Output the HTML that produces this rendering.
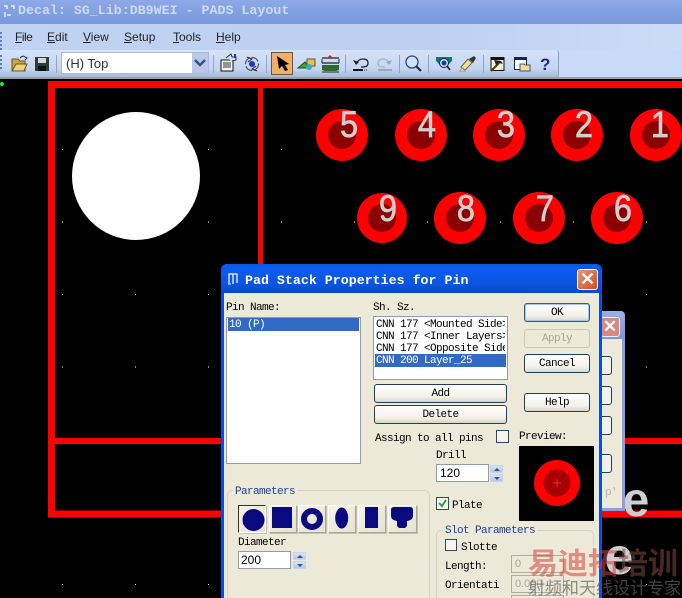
<!DOCTYPE html>
<html><head><meta charset="utf-8">
<style>
html,body{margin:0;padding:0;background:#000}
#p{position:relative;width:682px;height:598px;overflow:hidden;background:#000;font-family:"Liberation Mono",monospace;font-size:10px;color:#000}
#p div{position:absolute;box-sizing:border-box}
.t{white-space:pre;line-height:12px;font-size:11px;letter-spacing:-.6px;margin-top:1px}
.b{background:linear-gradient(#fff,#f2f1ea 70%,#d8d5c6);border:1px solid #1f3f5f;border-radius:3px;text-align:center;line-height:18px;font-size:11px;letter-spacing:-.6px;white-space:pre}
.i{background:#fff;border:1px solid #8d9cae}
.s{background:linear-gradient(#dbe5f7,#b5c7ea);border:1px solid #c6d3ec;width:13px;height:8px;border-radius:1px}
.s::after{content:"";position:absolute;left:3px;top:2px;border-left:3px solid transparent;border-right:3px solid transparent}
.u::after{border-bottom:3px solid #34508a}
.n::after{border-top:3px solid #34508a}
.c{background:#f6f5ee;border:1px solid #2b4a68;width:13px;height:13px}
.g{border:1px solid #d6d2c0;border-radius:5px}
.sh{width:28px;height:28px;background:linear-gradient(135deg,#f4f2e6,#e6e3d2);border:1px solid;border-color:#fff #a9a695 #a9a695 #fff;box-shadow:1px 1px 0 #c4c1b0}
</style></head><body><div id="p">

<!-- title / menu / toolbar -->
<div style="left:0;top:0;width:682px;height:24px;background:linear-gradient(#8ea9e6,#7f9fe0 60%,#7a9ade)"></div>
<div class="t" style="left:18px;top:3px;margin:0;letter-spacing:0;font-size:13.3px;line-height:16px;font-weight:bold;color:#cdd9f3">Decal: SG_Lib:DB9WEI - PADS Layout</div>
<svg style="position:absolute;left:2px;top:3px" width="14" height="16"><path d="M2 3h3v3M9 3h3v3M5 12h4M3 9v5" stroke="#e8eef8" stroke-width="1.4" fill="none"/></svg>
<div style="left:0;top:24px;width:682px;height:26px;background:linear-gradient(90deg,#c0d3f2,#bdd0f1 60%,#cbdcf8)"></div>
<div style="left:0;top:32px;width:2px;height:20px;background:repeating-linear-gradient(#5f7db0 0 2px,transparent 2px 4px)"></div>
<div style="left:0;top:29px;width:682px;height:16px;font:12px/16px 'Liberation Sans',sans-serif;color:#222">
<div style="left:15px;letter-spacing:-.5px"><u>F</u>ile</div><div style="left:47px"><u>E</u>dit</div><div style="left:83px"><u>V</u>iew</div><div style="left:124px"><u>S</u>etup</div><div style="left:173px"><u>T</u>ools</div><div style="left:216px"><u>H</u>elp</div></div>
<div style="left:0;top:50px;width:682px;height:29px;background:#c8daf7"></div>
<div style="left:0;top:50px;width:559px;height:28px;background:linear-gradient(#d6e3f8,#c3d5f2 70%,#a5bad9);border-radius:0 3px 3px 0;border-right:1px solid #8da2c4;border-bottom:1px solid #7288ac"></div>
<div style="left:0;top:77px;width:682px;height:2px;background:#9a9fa8"></div>
<div style="left:0;top:55px;width:2px;height:16px;background:repeating-linear-gradient(#5f7db0 0 2px,transparent 2px 4px)"></div>
<div style="left:61px;top:52px;width:148px;height:22px;background:#fff;border:1px solid #a9bcd6"></div>
<div style="left:66px;top:55px;font:13px/17px 'Liberation Sans',sans-serif;color:#333">(H) Top</div>
<div style="left:192px;top:53px;width:16px;height:20px;background:#b9c9e6"></div>
<svg style="position:absolute;left:0;top:50px" width="560" height="28" viewBox="0 50 560 28">
<path d="M195 60l5 5 5-5" stroke="#34508a" stroke-width="2.400" fill="none"/>
<g stroke="#8ea5c8"><path d="M56.500 55v18M213.500 55v18M266.500 55v18M345.500 55v18M399.500 55v18M428.500 55v18M483.500 55v18"/></g>
<!-- folder -->
<path d="M12 59h6l2 2h5v10H12z" fill="#c8a840" stroke="#6a5420"/><path d="M12 71l4-7h11l-3 7z" fill="#ecd278" stroke="#6a5420"/><path d="M20 58q3-3 5-1l2 1-2 2" stroke="#1c3a78" fill="none"/>
<!-- save -->
<rect x="35" y="57" width="14" height="14" fill="#2f3d38"/><rect x="38" y="58" width="8" height="5" fill="#d8d8d0"/><rect x="38" y="66" width="8" height="5" fill="#111"/>
<!-- props -->
<path d="M221 60h12v11h-12z" fill="#f5f5f2" stroke="#111"/><path d="M223 63h8M223 65h8M223 67h8" stroke="#333"/><path d="M226 58l5-4 1 3h4v3l-4 1" fill="#d8e0f0" stroke="#334"/><path d="M234 54h2v4h-2z" fill="#1c3a9c"/>
<!-- sync -->
<circle cx="252" cy="64" r="6.500" fill="none" stroke="#555" stroke-width="1.300" stroke-dasharray="8 2"/><circle cx="252" cy="64" r="3" fill="#2233c0"/><path d="M247 57l5 2-4 3M257 71l-5-2 4-3" fill="none" stroke="#222"/>
<!-- arrow btn -->
<rect x="271.500" y="52.500" width="21" height="22" fill="#f8ae62" stroke="#5f5a48"/><path d="M277 56l12 8-4 1 3 5-3 1-3-5-3 3z" fill="#000"/>
<!-- green -->
<path d="M298 68l7-6 5 6z" fill="#38a838" stroke="#205020"/><rect x="307" y="59" width="8" height="7" fill="#e8c050" stroke="#554"/><circle cx="309" cy="67" r="3" fill="#40a8c0"/>
<!-- board -->
<path d="M322 58h17M322 63h17" stroke="#222" stroke-width="1.200"/><path d="M330 55l3 3h-6z" fill="#d02020"/><path d="M322 59v4M339 59v4" stroke="#222"/><path d="M322 65h17v5l-3 1h-11l-3-1z" fill="#2c6a2c"/><path d="M322 72h17" stroke="#222"/>
<!-- undo -->
<path d="M356 64q2-5 7-5 5 0 5 4t-5 4h-2" fill="none" stroke="#222" stroke-width="1.200"/><path d="M353 60l3 5 3-3z" fill="#222"/><rect x="353" y="69" width="10" height="2" fill="#111"/><path d="M364 70h4" stroke="#333" stroke-dasharray="1 1"/>
<!-- redo -->
<path d="M390 64q-2-5-7-5-5 0-5 4t5 4h2" fill="none" stroke="#9ba" stroke-width="1.200"/><path d="M392 60l-3 5-3-3z" fill="#9aa"/><rect x="378" y="69" width="14" height="2" fill="#9aa6b4"/>
<!-- zoom -->
<circle cx="412" cy="62" r="6" fill="#cfe3f6" stroke="#2c4a78" stroke-width="1.300"/><path d="M416 66l5 5" stroke="#1c2c58" stroke-width="2.200"/>
<!-- view -->
<path d="M436 57h16v4l-3 3h-10l-3-3z" fill="#0f7a7a"/><circle cx="444" cy="63" r="4.500" fill="#cfe0f0" stroke="#223"/><circle cx="444" cy="63" r="2.500" fill="#1c30c0"/><path d="M447 66l3 4" stroke="#123" stroke-width="1.600"/>
<!-- brush -->
<path d="M461 67l7-8 4 4-7 7z" fill="#f0e090" stroke="#665"/><path d="M462 68l-2 3h5z" fill="#f6f6e0" stroke="#998"/><path d="M469 59l5-3 2 2-3 5z" fill="#333"/>
<!-- hammer -->
<rect x="491" y="57.500" width="13" height="13" fill="#f5f0d8" stroke="#111"/><path d="M491 58h13v2h-13z" fill="#111"/><path d="M491 71l8-8" stroke="#5a3a10" stroke-width="2"/><path d="M494 60l7 1 2 3-4-1-3 2z" fill="#222"/>
<!-- window folder -->
<rect x="514.500" y="57.500" width="12" height="12" fill="#fff" stroke="#13206a"/><rect x="514" y="57" width="13" height="3" fill="#13206a"/><path d="M520 64h4l1 1h5v6h-10z" fill="#e8dd9a" stroke="#555"/>
<text x="540" y="70" font-family="Liberation Sans" font-weight="bold" font-size="17" fill="#1a2a80">?</text>
</svg>

<!-- canvas -->
<svg style="position:absolute;left:0;top:79px" width="682" height="519" viewBox="0 79 682 519">
<defs><pattern id="d" x="0" y="0" width="73" height="72.500" patternUnits="userSpaceOnUse"><rect x="62" y="4" width="1" height="1" fill="#fff"/></pattern></defs>
<rect x="0" y="79" width="682" height="519" fill="url(#d)"/>
<circle cx="2" cy="84" r="2" fill="#2fe02f"/>
<g fill="none" stroke="#f00">
<path d="M682 84.500H51.500V514H682" stroke-width="7"/>
<path d="M260.500 85V441" stroke-width="5"/>
<path d="M51 441H682" stroke-width="6"/>
</g>
<circle cx="136" cy="176" r="64" fill="#fff"/>
<g>
<circle cx="342" cy="135" r="26" fill="#f00"/><circle cx="342" cy="135" r="14" fill="#8b0000"/>
<circle cx="421" cy="135" r="26" fill="#f00"/><circle cx="421" cy="135" r="14" fill="#8b0000"/>
<circle cx="499" cy="135" r="26" fill="#f00"/><circle cx="499" cy="135" r="14" fill="#8b0000"/>
<circle cx="577" cy="135" r="26" fill="#f00"/><circle cx="577" cy="135" r="14" fill="#8b0000"/>
<circle cx="656" cy="135" r="26" fill="#f00"/><circle cx="656" cy="135" r="14" fill="#8b0000"/>
<circle cx="382" cy="218" r="25" fill="#f00"/><circle cx="382" cy="218" r="14" fill="#8b0000"/>
<circle cx="460" cy="218" r="26" fill="#f00"/><circle cx="460" cy="218" r="14" fill="#8b0000"/>
<circle cx="539" cy="218" r="26" fill="#f00"/><circle cx="539" cy="218" r="14" fill="#8b0000"/>
<circle cx="617" cy="218" r="26" fill="#f00"/><circle cx="617" cy="218" r="14" fill="#8b0000"/>
</g>
<g transform="scale(.88,1)" font-family="Liberation Sans" font-size="37" fill="#cfcfcf" stroke="#cfcfcf" stroke-width=".7" text-anchor="middle">
<text x="396.600" y="137">5</text><text x="485.200" y="137">4</text><text x="575" y="137">3</text><text x="663.600" y="137">2</text><text x="750" y="137">1</text>
<text x="440.900" y="221">9</text><text x="529.500" y="221">8</text><text x="619.300" y="221">7</text><text x="707.900" y="221">6</text>
</g>
<g font-family="Liberation Sans" fill="#cfcfcf" text-anchor="middle" font-weight="bold">
<text x="636" y="516" font-size="48">e</text>
<text x="619" y="574" font-size="52">e</text>
</g>
</svg>

<!-- back dialog -->
<div style="left:590px;top:311px;width:35px;height:200px;background:#ece9d8;border:3px solid #8a9fe0;border-top:none;border-radius:4px 4px 0 0;border-left:none"></div>
<div style="left:590px;top:311px;width:34px;height:28px;background:linear-gradient(#9db0e8,#7f95dc);border-radius:4px 4px 0 0"></div>
<div style="left:600px;top:317px;width:20px;height:20px;background:#d98a80;border:1px solid #eee;border-radius:3px;color:#fff;font:bold 17px/17px 'Liberation Sans',sans-serif;text-align:center">✕</div>
<div style="left:590px;top:356px;width:22px;height:19px;background:#f3f2ea;border:1px solid #1f3f5f;border-radius:3px"></div>
<div style="left:590px;top:386px;width:22px;height:19px;background:#f3f2ea;border:1px solid #1f3f5f;border-radius:3px"></div>
<div style="left:590px;top:416px;width:22px;height:19px;background:#f3f2ea;border:1px solid #1f3f5f;border-radius:3px"></div>
<div style="left:590px;top:454px;width:22px;height:19px;background:#f3f2ea;border:1px solid #1f3f5f;border-radius:3px"></div>
<div class="t" style="left:605px;top:486px;color:#b8b6a8">p'</div>

<!-- main dialog -->
<div style="left:221px;top:264px;width:381px;height:334px;background:#ece9d8;border:3px solid #0a4fd8;border-top:none;border-bottom:none;border-radius:6px 6px 0 0"></div>
<div style="left:221px;top:264px;width:381px;height:29px;background:linear-gradient(#0b5ae0,#0a5cf0 15%,#0a55e0 70%,#0a47c8);border-radius:6px 6px 0 0"></div>
<svg style="position:absolute;left:226px;top:271px" width="16" height="16"><path d="M3 13V3h4v10M7 3h4v3M11 3v9" stroke="#fff" stroke-width="1.200" fill="none"/><path d="M2 13h3" stroke="#9cf" stroke-width="1.500"/></svg>
<div class="t" style="left:245px;top:273px;margin:0;letter-spacing:0;font-size:13.3px;line-height:16px;font-weight:bold;color:#fff">Pad Stack Properties for Pin</div>
<div style="left:577px;top:269px;width:21px;height:21px;background:linear-gradient(135deg,#e89878,#d84a20);border:1px solid #fff;border-radius:3px;color:#fff;font:bold 18px/19px 'Liberation Sans',sans-serif;text-align:center">✕</div>

<div class="t" style="left:226px;top:301px">Pin Name:</div>
<div class="i" style="left:226px;top:317px;width:135px;height:147px"></div>
<div style="left:228px;top:318px;width:131px;height:13px;background:#316ac5"></div>
<div class="t" style="left:229px;top:318px;color:#fff">10 (P)</div>

<div class="t" style="left:373px;top:301px">Sh. Sz.</div>
<div class="i" style="left:373px;top:316px;width:135px;height:64px;overflow:hidden">
<div style="left:1px;top:37px;width:131px;height:13px;background:#316ac5"></div>
<div class="t" style="left:2px;top:1px;width:129px;height:13px;overflow:hidden">CNN 177 &lt;Mounted Side&gt;</div>
<div class="t" style="left:2px;top:13px;width:129px;height:13px;overflow:hidden">CNN 177 &lt;Inner Layers&gt;</div>
<div class="t" style="left:2px;top:25px;width:129px;height:13px;overflow:hidden">CNN 177 &lt;Opposite Side&gt;</div>
<div class="t" style="left:2px;top:37px;color:#fff">CNN 200 Layer_25</div>
</div>
<div class="b" style="left:374px;top:384px;width:133px;height:19px">Add</div>
<div class="b" style="left:374px;top:405px;width:133px;height:19px">Delete</div>
<div class="b" style="left:524px;top:303px;width:66px;height:19px;border-color:#2a5a9c;box-shadow:inset 0 0 0 1px #a8c4ec">OK</div>
<div class="b" style="left:524px;top:329px;width:66px;height:19px;color:#a8a698;border-color:#ccc9ba;background:#ece9d8">Apply</div>
<div class="b" style="left:524px;top:354px;width:66px;height:19px">Cancel</div>
<div class="b" style="left:524px;top:393px;width:66px;height:19px">Help</div>

<div class="t" style="left:375px;top:432px">Assign to all pins</div>
<div class="c" style="left:496px;top:430px"></div>
<div class="t" style="left:519px;top:430px">Preview:</div>
<div style="left:519px;top:446px;width:75px;height:75px;background:#000"></div>
<svg style="position:absolute;left:519px;top:446px" width="75" height="75"><circle cx="38" cy="37" r="23" fill="#f00"/><circle cx="38" cy="37" r="13.500" fill="#a80000"/><path d="M34 37h8M38 33v8" stroke="#e03030"/></svg>
<div class="t" style="left:436px;top:449px">Drill</div>
<div class="i" style="left:436px;top:464px;width:53px;height:18px;font:12px/16px 'Liberation Sans',sans-serif;padding-left:3px">120</div>
<div class="s u" style="left:490px;top:465px"></div><div class="s n" style="left:490px;top:474px"></div>
<div class="c" style="left:436px;top:497px"></div>
<svg style="position:absolute;left:436px;top:497px" width="13" height="13"><path d="M3 6l3 3 4-6" stroke="#3a9a3a" stroke-width="2" fill="none"/></svg>
<div class="t" style="left:452px;top:499px">Plate</div>

<!-- parameters -->
<div class="g" style="left:227px;top:490px;width:203px;height:120px"></div>
<div class="t" style="left:233px;top:485px;background:#ece9d8;color:#1c3f9c;padding:0 2px">Parameters</div>
<div class="sh" style="left:238px;top:505px;border-color:#333 #fff #fff #333"></div>
<div class="sh" style="left:269px;top:505px"></div>
<div class="sh" style="left:298px;top:505px"></div>
<div class="sh" style="left:328px;top:505px"></div>
<div class="sh" style="left:358px;top:505px"></div>
<div class="sh" style="left:388px;top:505px;width:29px"></div>
<svg style="position:absolute;left:238px;top:505px" width="180" height="28" viewBox="238 505 180 28" fill="#0a0a80">
<circle cx="253.500" cy="520" r="11"/><rect x="272" y="507" width="20" height="21"/>
<circle cx="312" cy="519" r="8" fill="none" stroke="#0a0a80" stroke-width="6"/>
<ellipse cx="341.700" cy="518" rx="6.500" ry="10.500"/><rect x="365" y="507" width="13" height="21"/>
<path d="M391 510q0-3 3-3h16q3 0 3 3v6q0 4-6 5v5l-2 2h-6l-2-2v-5q-6-1-6-5z"/>
</svg>
<div class="t" style="left:238px;top:536px">Diameter</div>
<div class="i" style="left:238px;top:551px;width:53px;height:18px;font:12px/16px 'Liberation Sans',sans-serif;padding-left:2px">200</div>
<div class="s u" style="left:293px;top:552px"></div><div class="s n" style="left:293px;top:561px"></div>

<!-- slot -->
<div class="g" style="left:436px;top:530px;width:158px;height:90px"></div>
<div class="t" style="left:443px;top:524px;background:#ece9d8;color:#1c3f9c;padding:0 2px">Slot Parameters</div>
<div class="c" style="left:445px;top:539px;width:12px;height:12px"></div>
<div class="t" style="left:461px;top:541px">Slotte</div>
<div class="t" style="left:445px;top:560px">Length:</div>
<div class="t" style="left:445px;top:579px">Orientati</div>
<div class="i" style="left:511px;top:555px;width:53px;height:18px;border-color:#b0ae9e;background:#ece9d8;color:#a8a698;font:11px/16px 'Liberation Sans',sans-serif;padding-left:3px">0</div>
<div class="i" style="left:511px;top:575px;width:53px;height:18px;border-color:#b0ae9e;background:#ece9d8;color:#a8a698;font:11px/16px 'Liberation Sans',sans-serif;padding-left:3px">0.000</div>
<div class="i" style="left:511px;top:595px;width:53px;height:18px;border-color:#b0ae9e;background:#ece9d8"></div>

<!-- watermark -->
<div style="left:528px;top:544px;white-space:pre;font:bold 30px/34px 'Noto Sans CJK SC',sans-serif;color:rgba(214,70,60,.55)">易迪拓<span style="color:rgba(130,70,70,.55)">培训</span></div>
<div style="left:528px;top:577px;white-space:pre;font:17px/20px 'Noto Sans CJK SC',sans-serif;color:rgba(95,95,95,.7)">射频和天线设计专家</div>
</div></body></html>
